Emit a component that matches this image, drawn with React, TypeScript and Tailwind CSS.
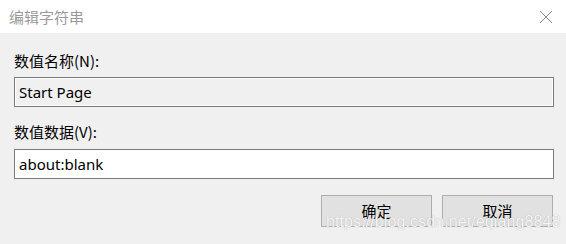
import React from "react";

export default function App() {
  const font = "font-['Noto_Sans','Noto_Sans_CJK_SC',sans-serif]";
  return (
    <div className={`relative w-[566px] h-[244px] bg-[#f0f0f0] overflow-hidden ${font} text-[15px] text-black`}>
      <div className="h-[33px] bg-white flex items-center justify-between pl-[9px] pr-[13px]">
        <span className="text-[15px] text-[#9a9a9a] leading-[20px] font-['Noto_Sans_CJK_SC',sans-serif]">编辑字符串</span>
        <svg width="14" height="14" viewBox="0 0 14 14" className="mr-[0px]">
          <path d="M1 1 L13 13 M13 1 L1 13" stroke="#8a8a8a" strokeWidth="1" fill="none" />
        </svg>
      </div>
      <div className="pl-[14px] pr-[12px] pt-[18px] flex flex-col">
        <div className="h-[20px] leading-[20px] mb-[6px] font-['Noto_Sans_CJK_SC',sans-serif]">数值名称(N):</div>
        <div className="h-[30px] border border-[#7a7a7a] bg-[#f0f0f0] p-0">
          <div className="h-full border border-white flex items-center pl-[3px] leading-none">Start Page</div>
        </div>
        <div className="h-[20px] leading-[20px] mt-[15px] mb-[7px] font-['Noto_Sans_CJK_SC',sans-serif]">数值数据(V):</div>
        <div className="h-[30px] border border-[#7a7a7a] bg-white flex items-center pl-[4px] leading-none">about:blank</div>
        <div className="flex justify-end gap-[10px] mt-[16px] pr-[1px]">
          <div className="w-[111px] h-[32px] border border-[#adadad] bg-[#e1e1e1] flex items-center justify-center font-['Noto_Sans_CJK_SC',sans-serif]">确定</div>
          <div className="w-[111px] h-[32px] border border-[#adadad] bg-[#e1e1e1] flex items-center justify-center font-['Noto_Sans_CJK_SC',sans-serif]">取消</div>
        </div>
      </div>
      <div className="absolute left-[326px] top-[212px] text-[16px] leading-[20px] text-white/90 font-['Liberation_Sans',sans-serif] [text-shadow:0_0_1px_#9a9a9a] tracking-[0.1px]">
        https://blog.csdn.net/eqiang8848
      </div>
    </div>
  );
}
